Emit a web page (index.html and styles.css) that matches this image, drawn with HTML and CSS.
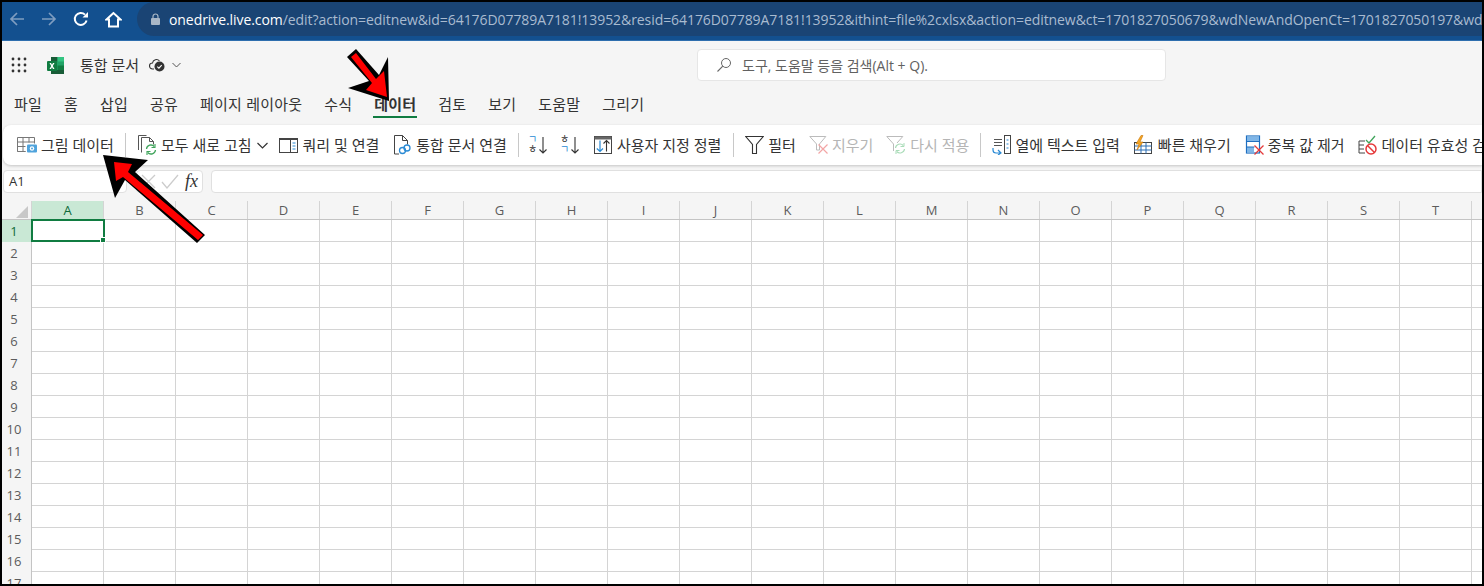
FILE: index.html
```html
<!DOCTYPE html>
<html lang="ko">

<head>
    <meta charset="UTF-8">
    <meta name="viewport" content="width=device-width, initial-scale=1.0">
    <title>통합 문서</title>
    <link rel="stylesheet" href="styles.css">
</head>

<body>
    <div class="app">
        <!-- browser bar -->
        <div class="browser-bar">
            <svg class="nav-icon" width="16" height="16" viewBox="0 0 16 16"><path d="M15 8H2M8 2 2 8l6 6" fill="none" stroke="#7f9dc0" stroke-width="1.7"/></svg>
            <svg class="nav-icon" width="16" height="16" viewBox="0 0 16 16"><path d="M1 8h13M8 2l6 6-6 6" fill="none" stroke="#7f9dc0" stroke-width="1.7"/></svg>
            <svg class="nav-icon" width="16" height="16" viewBox="0 0 16 16"><path d="M13.6 9.500A6 6 0 1 1 12 3.600" fill="none" stroke="#fff" stroke-width="2"/><path d="M9.500 6.500h5.500V1z" fill="#fff"/></svg>
            <svg class="nav-icon" width="17" height="17" viewBox="0 0 17 17"><path d="M8.500 2 1.500 8.500h2.500V15.500h9V8.500h2.500z" fill="none" stroke="#fff" stroke-width="2"/></svg>
            <div class="url-pill">
                <svg class="lock" width="9" height="12" viewBox="0 0 9 12"><path d="M2 5V3.500a2.500 2.500 0 0 1 5 0V5" fill="none" stroke="#a8b6c6" stroke-width="1.200"/><rect y="5" width="9" height="7" rx="1" fill="#a8b6c6"/></svg>
                <span class="url-text"><span class="url-host">onedrive.live.com</span>/edit?action=editnew&amp;id=64176D07789A7181!13952&amp;resid=64176D07789A7181!13952&amp;ithint=file%2cxlsx&amp;action=editnew&amp;ct=1701827050679&amp;wdNewAndOpenCt=1701827050197&amp;wdOrigin</span>
            </div>
        </div>

        <!-- title row -->
        <div class="title-row">
            <div class="title-left">
                <svg class="waffle" width="16" height="16" viewBox="0 0 16 16" fill="#333">
                    <circle cx="2" cy="2" r="1.400"/><circle cx="8" cy="2" r="1.400"/><circle cx="14" cy="2" r="1.400"/>
                    <circle cx="2" cy="8" r="1.400"/><circle cx="8" cy="8" r="1.400"/><circle cx="14" cy="8" r="1.400"/>
                    <circle cx="2" cy="14" r="1.400"/><circle cx="8" cy="14" r="1.400"/><circle cx="14" cy="14" r="1.400"/>
                </svg>
                <svg class="excel-logo" width="17" height="17" viewBox="0 0 17 17">
                    <rect x="4" y="0" width="13" height="17" rx="1" fill="#21a366"/>
                    <rect x="4" y="0" width="6.500" height="4.500" fill="#185c37"/>
                    <rect x="10.500" y="0" width="6.500" height="4.500" fill="#33c481"/>
                    <rect x="10.500" y="8.500" width="6.500" height="4.500" fill="#107c41"/>
                    <rect x="4" y="13" width="13" height="4" fill="#185c37"/>
                    <rect x="0" y="4" width="10" height="10" rx="1" fill="#107c41"/>
                    <path d="M2.500 6h1.500l1 1.800L6 6h1.500L5.800 9l1.700 3H6L5 10.200 4 12H2.500l1.700-3z" fill="#fff"/>
                </svg>
                <span class="doc-title">통합 문서</span>
                <svg class="cloud" width="16" height="16" viewBox="0 0 16 16"><path d="M5 12H3.500a3 3 0 0 1 0-6 4 4 0 0 1 7-2" fill="none" stroke="#333" stroke-width="1.100"/><circle cx="10.500" cy="9.500" r="5" fill="#333"/><path d="m8.300 9.700 1.600 1.500 2.800-3" fill="none" stroke="#fff" stroke-width="1.100"/></svg>
                <svg class="caret" width="9" height="6" viewBox="0 0 9 6"><path d="m.5 1 4 4 4-4" fill="none" stroke="#555"/></svg>
            </div>
            <div class="search-box">
                <svg width="16" height="16" viewBox="0 0 16 16"><circle cx="10" cy="6" r="4.500" fill="none" stroke="#666"/><path d="M6.800 9.200 1.500 14.500" stroke="#666" stroke-width="1.100"/></svg>
                <span>도구, 도움말 등을 검색(Alt + Q).</span>
            </div>
        </div>

        <!-- ribbon tabs -->
        <div class="tabs">
            <span class="tab">파일</span>
            <span class="tab">홈</span>
            <span class="tab">삽입</span>
            <span class="tab">공유</span>
            <span class="tab">페이지 레이아웃</span>
            <span class="tab">수식</span>
            <span class="tab active">데이터</span>
            <span class="tab">검토</span>
            <span class="tab">보기</span>
            <span class="tab">도움말</span>
            <span class="tab">그리기</span>
        </div>

        <!-- ribbon -->
        <div class="ribbon">
            <div class="rb-item">
                <svg width="20" height="20" viewBox="0 0 20 20"><path d="M.5 2.500h17v6M.5 2.500v14h8M.5 7h17M.5 11.500h8M.5 16.500h8M6 2.500v14M12 2.500v5" fill="none" stroke="#777"/><rect x="10" y="9.500" width="10" height="8" rx="1" fill="#4fa3dc"/><circle cx="15" cy="13.500" r="2.200" fill="#fff"/><circle cx="15" cy="13.500" r="1" fill="#4fa3dc"/></svg>
                <span>그림 데이터</span>
            </div>
            <div class="rb-sep first"></div>
            <div class="rb-item item-caret">
                <svg width="20" height="20" viewBox="0 0 20 20"><path d="M3.500 17.500V2.500h8l4 4v3M.5 15V.5h8" fill="none" stroke="#555"/><path d="M11.500 2.500v4h4" fill="none" stroke="#555"/><path d="M8.500 14a4.500 4.500 0 0 1 7.800-2.500M17.500 15a4.500 4.500 0 0 1-7.800 2.500" fill="none" stroke="#3fa45b" stroke-width="1.300"/><path d="m17 9 0 3.500h-3.500M9 20v-3.500h3.500" fill="none" stroke="#3fa45b" stroke-width="1.100"/></svg>
                <span>모두 새로 고침</span>
                <svg width="11" height="7" viewBox="0 0 11 7"><path d="m.5 1 5 5 5-5" fill="none" stroke="#333" stroke-width="1.200"/></svg>
            </div>
            <div class="rb-item">
                <svg width="20" height="20" viewBox="0 0 20 20"><rect x=".5" y="3.500" width="18" height="14" fill="none" stroke="#444"/><path d="M.5 4h18" stroke="#444" stroke-width="2"/><path d="M11.500 4v13.500" stroke="#444"/><path d="M13.500 8h3M13.500 11h3M13.500 14h3" stroke="#2a8ad4" stroke-width="1.200"/></svg>
                <span>쿼리 및 연결</span>
            </div>
            <div class="rb-item">
                <svg width="20" height="20" viewBox="0 0 20 20"><path d="M7 19H2.500V.5h8l5 5v4M10.500.5v5h5" fill="none" stroke="#444"/><circle cx="10.500" cy="15.500" r="3" fill="none" stroke="#2a8ad4" stroke-width="1.300"/><circle cx="15" cy="13" r="3" fill="none" stroke="#2a8ad4" stroke-width="1.300"/></svg>
                <span>통합 문서 연결</span>
            </div>
            <div class="rb-sep sort-sep"></div>
            <div class="rb-item sort-item">
                <span class="sort-glyph"><span class="sort-blue">ㄱ</span><span>ㅎ</span></span>
                <svg width="8" height="17" viewBox="0 0 8 17"><path d="M4 0v16M.5 12.500 4 16l3.500-3.500" fill="none" stroke="#333" stroke-width="1.100"/></svg>
            </div>
            <div class="rb-item sort-item second">
                <span class="sort-glyph"><span>ㅎ</span><span class="sort-blue">ㄱ</span></span>
                <svg width="8" height="17" viewBox="0 0 8 17"><path d="M4 0v16M.5 12.500 4 16l3.500-3.500" fill="none" stroke="#333" stroke-width="1.100"/></svg>
            </div>
            <div class="rb-item custom-sort">
                <svg width="18" height="18" viewBox="0 0 18 18"><rect x=".5" y=".5" width="17" height="17" fill="none" stroke="#444"/><path d="M.5 2h17" stroke="#666" stroke-width="3"/><path d="M6 4.500v11M2.800 12.500 6 15.500l3-3" fill="none" stroke="#2a8ad4" stroke-width="1.200"/><path d="M12.500 15.500v-11M9.500 7.500l3-3 3 3" fill="none" stroke="#333" stroke-width="1.100"/></svg>
                <span>사용자 지정 정렬</span>
            </div>
            <div class="rb-sep"></div>
            <div class="rb-item">
                <svg width="19" height="20" viewBox="0 0 19 20"><path d="M.8 1.500h17.400L11.500 9.500v9H7.500v-9z" fill="none" stroke="#333" stroke-width="1.100"/></svg>
                <span>필터</span>
            </div>
            <div class="rb-item disabled tight">
                <svg width="20" height="20" viewBox="0 0 20 20"><path d="M.8 1.500h16L10.500 9v6H7.500V9z" fill="none" stroke="#bbb"/><path d="m9.500 9.500 9 9M18.500 9.500l-9 9" stroke="#f3a5a5" stroke-width="1.200"/></svg>
                <span>지우기</span>
            </div>
            <div class="rb-item disabled">
                <svg width="20" height="20" viewBox="0 0 20 20"><path d="M.8 1.500h16L11 8M7.500 16V9L.8 1.500" fill="none" stroke="#bbb"/><path d="M9.500 13a4.500 4.500 0 0 1 7.800-2.500M18.500 14a4.500 4.500 0 0 1-7.800 2.500" fill="none" stroke="#a9dcb8" stroke-width="1.200"/><path d="m18 8 0 3.500h-3.500M10 19v-3.500h3.500" fill="none" stroke="#a9dcb8"/></svg>
                <span>다시 적용</span>
            </div>
            <div class="rb-sep"></div>
            <div class="rb-item tight">
                <svg width="20" height="20" viewBox="0 0 20 20"><path d="M2 4.500h8M2 7.500h8M2 10.500h8" stroke="#555"/><rect x="12.500" y=".5" width="6" height="18" fill="none" stroke="#444"/><path d="M14.500 5h2M14.500 9h2M14.500 13h2" stroke="#2a8ad4"/><path d="M1 13v2a3 3 0 0 0 3 3h5M6 15l3 3-3 2" fill="none" stroke="#2a8ad4" stroke-width="1.200"/></svg>
                <span>열에 텍스트 입력</span>
            </div>
            <div class="rb-item wide">
                <svg width="20" height="20" viewBox="0 0 20 20"><rect x="1.500" y="7.500" width="17" height="11" fill="none" stroke="#444"/><path d="M1.500 11h17M1.500 15h17M8 7.500v11M13 7.500v11" stroke="#2a6fb5"/><path d="M8 .5 3 9h3l-2 6 6-8H7l3-6.500z" fill="#f5a623" stroke="#c8760c" stroke-width=".6"/></svg>
                <span>빠른 채우기</span>
            </div>
            <div class="rb-item tight">
                <svg width="20" height="20" viewBox="0 0 20 20"><rect x="1.500" y="1" width="13" height="17" fill="#fff" stroke="#1f6fc0" stroke-width="1.200"/><rect x="2" y="1.500" width="12" height="5" fill="#7fb6e8"/><rect x="2" y="12" width="7" height="5.500" fill="#7fb6e8"/><path d="M1.500 6.500h13M1.500 12h8" stroke="#1f6fc0"/><path d="m9.500 10.500 9 9M18.500 10.500l-9 9" stroke="#e5393a" stroke-width="1.300"/></svg>
                <span>중복 값 제거</span>
            </div>
            <div class="rb-item">
                <svg width="20" height="20" viewBox="0 0 20 20"><path d="M1 6h6M1 10h5M1 14h5M1 18h6M1 6v12" fill="none" stroke="#444"/><path d="m8 5 3 3 6-7" fill="none" stroke="#3fa45b" stroke-width="1.300"/><circle cx="13" cy="14" r="5" fill="#fff" stroke="#e5393a" stroke-width="1.500"/><path d="m9.500 10.500 7 7" stroke="#e5393a" stroke-width="1.500"/></svg>
                <span>데이터 유효성 검사</span>
            </div>
        </div>

        <!-- formula bar -->
        <div class="formula-bar">
            <div class="name-box">
                <span>A1</span>
                <svg width="11" height="7" viewBox="0 0 11 7"><path d="m.5 1 5 5 5-5" fill="none" stroke="#555"/></svg>
            </div>
            <div class="fx-box">
                <svg width="15" height="15" viewBox="0 0 15 15"><path d="m1 1 13 13M14 1 1 14" stroke="#ccc" stroke-width="1.300"/></svg>
                <svg width="18" height="15" viewBox="0 0 18 15"><path d="m1 8 5 6L17 1" fill="none" stroke="#ccc" stroke-width="1.300"/></svg>
                <span class="fx-label">fx</span>
            </div>
            <div class="formula-input"></div>
        </div>

        <!-- sheet -->
        <div class="sheet">
            <div class="col-heads">
                <div class="corner"></div>
                <div class="col-head selected">A</div>
                <div class="col-head">B</div>
                <div class="col-head">C</div>
                <div class="col-head">D</div>
                <div class="col-head">E</div>
                <div class="col-head">F</div>
                <div class="col-head">G</div>
                <div class="col-head">H</div>
                <div class="col-head">I</div>
                <div class="col-head">J</div>
                <div class="col-head">K</div>
                <div class="col-head">L</div>
                <div class="col-head">M</div>
                <div class="col-head">N</div>
                <div class="col-head">O</div>
                <div class="col-head">P</div>
                <div class="col-head">Q</div>
                <div class="col-head">R</div>
                <div class="col-head">S</div>
                <div class="col-head">T</div>
                <div class="col-head"></div>
            </div>
            <div class="sheet-body">
                <div class="row-heads">
                    <div class="row-head selected">1</div>
                    <div class="row-head">2</div>
                    <div class="row-head">3</div>
                    <div class="row-head">4</div>
                    <div class="row-head">5</div>
                    <div class="row-head">6</div>
                    <div class="row-head">7</div>
                    <div class="row-head">8</div>
                    <div class="row-head">9</div>
                    <div class="row-head">10</div>
                    <div class="row-head">11</div>
                    <div class="row-head">12</div>
                    <div class="row-head">13</div>
                    <div class="row-head">14</div>
                    <div class="row-head">15</div>
                    <div class="row-head">16</div>
                    <div class="row-head">17</div>
                </div>
                <div class="cells">
                    <div class="active-cell"></div>
                </div>
            </div>
        </div>

        <!-- red arrows drawn over the screenshot -->
        <svg class="arrows" width="1484" height="586" viewBox="0 0 1484 586">
            <path d="M356 49 379 75 388 57 389 101 348 88 369 81 347 57z" fill="#000"/>
            <path d="M356 53 376 79 384 71 387 97 366 90 372 83 351 57z" fill="#f00"/>
            <path d="M103 155 148 160 135 172 205 235 197 243 125 180 115 198z" fill="#000"/>
            <path d="M114 162 132 164 128 172 203 235 198 240 123 177 116 181z" fill="#f00"/>
        </svg>
    </div>
</body>

</html>
```

FILE: styles.css
```css
html,
body {
    height: 100%;
    margin: 0;
    background-color: #000;
}

.app {
    position: relative;
    display: flex;
    flex-direction: column;
    height: 582px;
    margin: 2px;
    overflow: hidden;
    background-color: #f5f5f5;
    color: #333;
    font-family: "Open Sans", "Noto Sans CJK KR", sans-serif;
    font-size: 15px;
}

svg {
    flex: none;
    display: block;
}

/* browser bar */
.browser-bar {
    display: flex;
    align-items: flex-start;
    flex: none;
    height: 38px;
    padding-left: 7px;
    background-color: #13508f;
    border-bottom: 1px solid #2e6eae;
}

.nav-icon {
    margin-top: 9px;
    margin-right: 16px;
}

.url-pill {
    display: flex;
    align-items: center;
    flex: 1;
    min-width: 0;
    height: 34px;
    margin-left: -1px;
    padding-left: 14px;
    background-color: #1a4474;
    border-radius: 17px 0 0 17px;
    overflow: hidden;
}

.lock {
    margin-right: 9px;
}

.url-text {
    color: #a9bbd0;
    font-family: "Open Sans", sans-serif;
    font-size: 14px;
    letter-spacing: -0.07px;
    white-space: nowrap;
}

.url-host {
    color: #fff;
}

/* title row */
.title-row {
    display: flex;
    align-items: center;
    flex: none;
    height: 48px;
}

.title-left {
    display: flex;
    align-items: center;
    width: 695px;
}

.waffle {
    margin-left: 9px;
}

.excel-logo {
    margin-left: 20px;
}

.doc-title {
    margin-left: 16px;
    margin-top: -2px;
    font-size: 15px;
}

.cloud {
    margin-left: 10px;
}

.caret {
    margin-left: 7px;
}

.search-box {
    display: flex;
    align-items: center;
    gap: 10px;
    box-sizing: border-box;
    width: 469px;
    height: 32px;
    padding-left: 18px;
    background-color: #fff;
    border: 1px solid #e6e6e6;
    border-radius: 4px;
    color: #616161;
    font-size: 14px;
}

/* ribbon tabs */
.tabs {
    display: flex;
    gap: 22px;
    flex: none;
    height: 30px;
    padding-left: 12px;
    letter-spacing: 0.2px;
}

.tab {
    height: 23px;
    padding-top: 4px;
    line-height: 22px;
}

.tab.active {
    margin: 0 -1px;
    padding-left: 1px;
    padding-right: 1px;
    font-weight: 700;
    border-bottom: 2px solid #107c41;
}

/* ribbon */
.ribbon {
    display: flex;
    align-items: center;
    flex: none;
    box-sizing: border-box;
    height: 40px;
    margin: 6px 0 0 1px;
    padding-left: 14px;
    background-color: #fff;
    border-radius: 8px 0 0 8px;
    box-shadow: 0 1px 3px rgba(0, 0, 0, 0.2);
    white-space: nowrap;
}

.rb-item {
    display: flex;
    align-items: center;
    gap: 4px;
    margin-right: 13px;
}

.rb-item span {
    margin-top: -2px;
}

.rb-item.disabled {
    color: #b5b5b5;
}

.rb-item.tight {
    gap: 3px;
}

.rb-item.wide {
    gap: 5px;
    margin-right: 14px;
}

.item-caret {
    gap: 3px;
    margin-right: 11px;
}

.item-caret svg:last-child {
    margin-left: 2px;
}

.rb-sep {
    flex: none;
    width: 1px;
    height: 24px;
    margin: 0 11px 0 -2px;
    background-color: #c8c8c8;
}

.rb-sep.first {
    margin-right: 12px;
}

.rb-sep.sort-sep {
    margin-right: 9px;
}

.sort-item {
    gap: 0;
}

.sort-item.second {
    margin-right: 15px;
}

.custom-sort {
    gap: 5px;
    margin-right: 14px;
}

.sort-glyph {
    display: block;
    width: 11px;
    font-size: 10px;
    line-height: 10px;
}

.sort-glyph span {
    display: block;
    margin: 0;
}

.sort-glyph .sort-blue {
    color: #2a8ad4;
}

/* formula bar */
.formula-bar {
    display: flex;
    flex: none;
    height: 23px;
    margin-top: 5px;
    padding-left: 1px;
}

.name-box,
.fx-box,
.formula-input {
    box-sizing: border-box;
    background-color: #fff;
    border: 1px solid #e0e0e0;
    border-radius: 4px;
}

.name-box {
    display: flex;
    align-items: center;
    justify-content: space-between;
    width: 124px;
    padding: 0 3px 2px 5px;
    font-size: 13px;
}

.fx-box {
    display: flex;
    align-items: center;
    gap: 5px;
    width: 67px;
    margin-left: 9px;
    padding-left: 4px;
}

.fx-label {
    margin-left: 1px;
    font-family: "Liberation Serif", serif;
    font-size: 18px;
    font-style: italic;
}

.formula-input {
    flex: 1;
    margin-left: 8px;
    border-radius: 4px 0 0 4px;
}

/* sheet */
.sheet {
    display: flex;
    flex-direction: column;
    flex: 1;
    min-height: 0;
    margin-top: 8px;
    background-color: #fff;
    color: #5c5c5c;
    font-size: 13px;
}

.col-heads {
    display: flex;
    flex: none;
    box-sizing: border-box;
    height: 19px;
    background-color: #f5f5f5;
    border-bottom: 1px solid #c4c4c4;
}

.corner {
    flex: none;
    position: relative;
    width: 30px;
    border-right: 1px solid #d4d4d4;
    box-sizing: border-box;
}

/* grey triangle in the select-all corner */
.corner::after {
    content: "";
    position: absolute;
    right: 3px;
    bottom: 1px;
    border-style: solid;
    border-width: 0 0 12px 12px;
    border-color: transparent transparent #c8c8c8 transparent;
}

.col-head {
    flex: none;
    box-sizing: border-box;
    width: 72px;
    border-right: 1px solid #d4d4d4;
    line-height: 19px;
    text-align: center;
}

.col-head.selected {
    background-color: #c9e8d5;
    color: #0f6b3a;
}

.sheet-body {
    display: flex;
    flex: 1;
    min-height: 0;
}

.row-heads {
    flex: none;
    box-sizing: border-box;
    width: 30px;
    background-color: #f5f5f5;
    border-right: 1px solid #c4c4c4;
    overflow: hidden;
}

.row-head {
    box-sizing: border-box;
    height: 22px;
    padding-right: 5px;
    line-height: 22px;
    text-align: center;
}

.row-head.selected {
    background-color: #c9e8d5;
    color: #0f6b3a;
}

.cells {
    position: relative;
    flex: 1;
    background-image:
        linear-gradient(to right, transparent 71px, #d4d4d4 71px),
        linear-gradient(to bottom, transparent 21px, #d4d4d4 21px);
    background-size: 72px 22px;
}

.active-cell {
    position: absolute;
    top: -1px;
    left: -1px;
    box-sizing: border-box;
    width: 74px;
    height: 23px;
    border: 2px solid #107c41;
}

.active-cell::after {
    content: "";
    position: absolute;
    right: -3px;
    bottom: -3px;
    width: 4px;
    height: 4px;
    background-color: #107c41;
    border: 1px solid #fff;
}

.arrows {
    position: absolute;
    top: -2px;
    left: -2px;
    pointer-events: none;
}
```
